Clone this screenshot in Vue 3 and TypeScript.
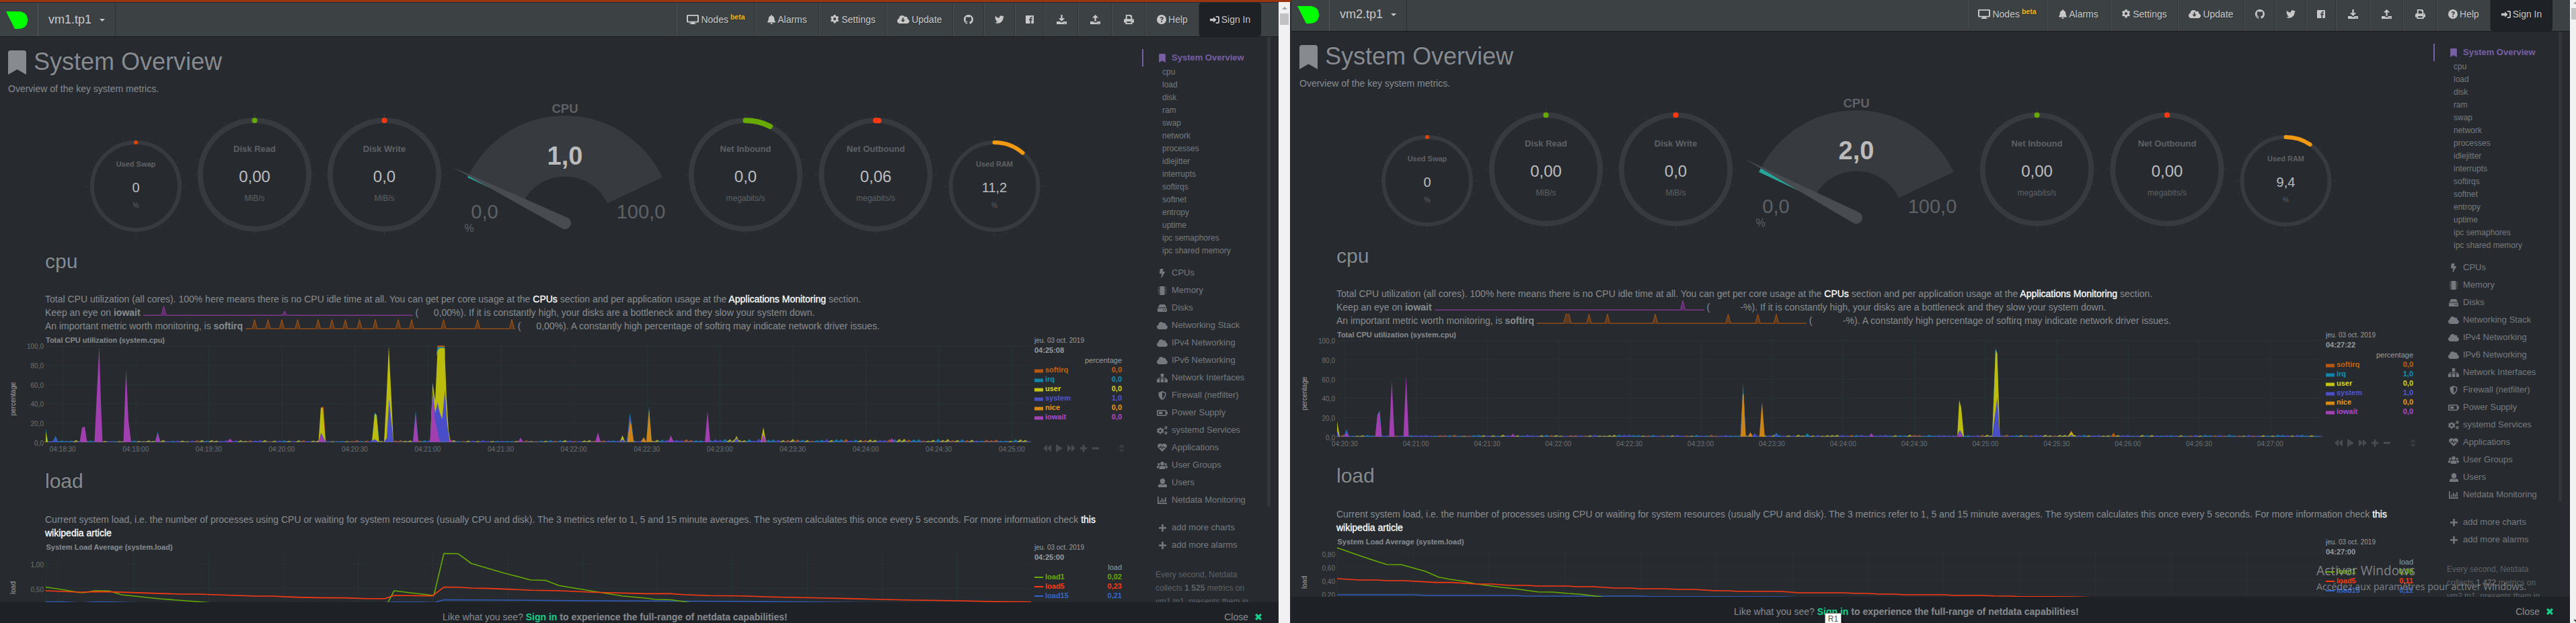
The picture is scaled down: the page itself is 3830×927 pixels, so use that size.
<script setup lang="ts">
interface Gauge { title: string; value: string; unit: string; cx: number; big: boolean; arc: number; color: string }
interface Spike { c: string; p: number[][] }
interface Legend { name: string; color: string; value: string }
interface Icon { w: number; h: number; d: string }
interface Panel {
  id: string; host: string; gauges: Gauge[]; cpu: string; cpuPct: number; unit: string
  iowait: number[][]; softirq: number[][]
  cpuTime: string; cpuTicks: { x: number; t: string }[]; spikes: Spike[]; noise: Spike[]; cpuLegend: Legend[]
  loadTime: string; loadGrid: { y: number; t: string }[]; loadX: number[]; lines: { color: string; d: string }[]; loadLegend: Legend[]
  metrics: string
}

const C = { softirq: '#b85c12', irq: '#0f86aa', user: '#bcbc0e', system: '#4a4dc8', nice: '#cb8415', iowait: '#a13fb0' }
const T = { softirq: '#c8600f', irq: '#1092b8', user: '#d8d812', system: '#5254d6', nice: '#ee9911', iowait: '#b447c6' }

const icons: Record<string, Icon> = {
  bookmark: { w: 384, h: 512, d: 'M0 512V48C0 21.49 21.49 0 48 0h288c26.51 0 48 21.49 48 48v464L192 400 0 512z' },
  desktop: { w: 18, h: 16, d: 'M1.5 0h15A1.5 1.5 0 0 1 18 1.500v10a1.500 1.500 0 0 1-1.500 1.500H11.500l.4 1.600H13.500V16h-9v-1.400h1.600l.4-1.600H1.500A1.500 1.500 0 0 1 0 11.500v-10A1.500 1.500 0 0 1 1.500 0zM2 2v9h14V2z' },
  bell: { w: 448, h: 512, d: 'M224 512c35.32 0 63.97-28.65 63.97-64H160.03c0 35.35 28.65 64 63.97 64zm215.39-149.71c-19.32-20.76-55.47-51.99-55.47-154.29 0-77.7-54.48-139.9-127.94-155.16V32c0-17.67-14.32-32-31.98-32s-31.98 14.33-31.98 32v20.84C118.56 68.1 64.08 130.3 64.08 208c0 102.3-36.15 133.53-55.47 154.29-6 6.45-8.66 14.16-8.61 21.71.11 16.4 12.98 32 32.1 32h383.8c19.12 0 32-15.6 32.1-32 .05-7.55-2.61-15.27-8.61-21.71z' },
  cog: { w: 16, h: 16, d: 'M6.500 0h3l.5 2.200 1.300.7 2.100-.7 1.500 2.600-1.600 1.500v1.500l1.600 1.500-1.500 2.600-2.100-.7-1.300.8-.5 2.200h-3L6 12l-1.300-.8-2.100.7-1.500-2.600 1.600-1.500V6.300L1.100 4.800l1.500-2.600 2.100.7L6 2.200zM8 4.700A2.400 2.400 0 1 0 8 9.500 2.400 2.400 0 0 0 8 4.700z' },
  cloud: { w: 640, h: 448, d: 'M537.6 194.600c4.100-10.700 6.400-22.400 6.400-34.600 0-53-43-96-96-96-19.700 0-38.100 6-53.300 16.200C367 32.200 315.300 0 256 0c-88.400 0-160 71.600-160 160 0 2.700.1 5.400.2 8.100C40.200 187.800 0 241.200 0 304c0 79.500 64.500 144 144 144h368c70.700 0 128-57.300 128-128 0-61.900-44-113.600-102.400-125.400z' },
  update: { w: 640, h: 448, d: 'M537.6 194.600c4.100-10.700 6.400-22.400 6.400-34.600 0-53-43-96-96-96-19.700 0-38.100 6-53.300 16.200C367 32.200 315.300 0 256 0c-88.400 0-160 71.600-160 160 0 2.700.1 5.400.2 8.100C40.200 187.800 0 241.200 0 304c0 79.500 64.500 144 144 144h368c70.700 0 128-57.300 128-128 0-61.900-44-113.600-102.400-125.400zM270 120h70v120h85L305 370 185 240h85z' },
  github: { w: 16, h: 16, d: 'M8 0C3.58 0 0 3.58 0 8c0 3.54 2.29 6.53 5.47 7.59.4.07.55-.17.55-.38 0-.19-.01-.82-.01-1.49-2.010.37-2.530-.49-2.690-.94-.09-.23-.48-.94-.82-1.130-.28-.15-.68-.52-.01-.53.63-.01 1.080.58 1.230.82.72 1.210 1.870.87 2.330.66.07-.52.28-.87.51-1.070-1.780-.2-3.640-.89-3.640-3.950 0-.87.31-1.590.82-2.150-.08-.2-.36-1.020.08-2.120 0 0 .67-.21 2.200.82.64-.18 1.320-.27 2-.27s1.360.09 2 .27c1.530-1.040 2.200-.82 2.200-.82.44 1.100.16 1.920.08 2.120.51.56.82 1.270.82 2.150 0 3.070-1.870 3.750-3.650 3.950.29.25.54.73.54 1.480 0 1.070-.01 1.930-.01 2.200 0 .21.15.46.55.38A8.010 8.010 0 0 0 16 8c0-4.420-3.580-8-8-8z' },
  twitter: { w: 512, h: 512, d: 'M459.37 151.716c.325 4.548.325 9.097.325 13.645 0 138.72-105.583 298.558-298.558 298.558-59.452 0-114.68-17.219-161.137-47.106 8.447.974 16.568 1.299 25.34 1.299 49.055 0 94.213-16.568 130.274-44.832-46.132-.975-84.792-31.188-98.112-72.772 6.498.974 12.995 1.624 19.818 1.624 9.421 0 18.843-1.3 27.614-3.573-48.081-9.747-84.143-51.98-84.143-102.985v-1.299c13.969 7.797 30.214 12.67 47.431 13.319-28.264-18.843-46.781-51.005-46.781-87.391 0-19.492 5.197-37.36 14.294-52.954 51.655 63.675 129.3 105.258 216.365 109.807-1.624-7.797-2.599-15.918-2.599-24.04 0-57.828 46.782-104.934 104.934-104.934 30.213 0 57.502 12.67 76.67 33.137 23.715-4.548 46.456-13.32 66.599-25.34-7.798 24.366-24.366 44.833-46.132 57.827 21.117-2.273 41.584-8.122 60.426-16.243-14.292 20.791-32.161 39.308-52.628 54.253z' },
  facebook: { w: 14, h: 14, d: 'M.8 0h12.400a.8.8 0 0 1 .8.8v12.400a.8.8 0 0 1-.8.8H9.700V8.600h1.800l.3-2.100H9.700V5.200c0-.6.2-1 1-1h1.100V2.300c-.2 0-.9-.1-1.600-.1-1.600 0-2.700 1-2.700 2.800v1.500H5.700v2.100h1.800V14H.8a.8.8 0 0 1-.8-.8V.8A.8.8 0 0 1 .8 0z' },
  download: { w: 16, h: 16, d: 'M6.800 0h2.400v6H13l-5 5-5-5h3.800zM0 11.500h5l3 2 3-2h5V16H0zm11.500 2.300v1h1v-1zm2 0v1h1v-1z' },
  upload: { w: 16, h: 16, d: 'M8 0l5 5H9.200v6H6.800V5H3zM0 11.500h5.500V13h5v-1.500H16V16H0zm11.500 2.300v1h1v-1zm2 0v1h1v-1z' },
  print: { w: 16, h: 16, d: 'M3 0h8l2 2v4.500a2.800 2.800 0 0 1 3 2.500v4h-2.500v3h-11v-3H0V9a2.800 2.800 0 0 1 3-2.500zM5 2v5h6V3.500H9.500V2zM4.500 11.500V14h7v-2.500zM13 8.300v1.200h1.200V8.300z' },
  help: { w: 16, h: 16, d: 'M8 0a8 8 0 1 1 0 16A8 8 0 0 1 8 0zM5 5.600l1.700.8c.3-.8.7-1.200 1.400-1.200.6 0 1.100.3 1.100.9 0 1.100-2.100 1.200-2.100 3.400h2c0-1.500 2.300-1.600 2.300-3.700C11.400 4.200 9.800 3.300 8.200 3.300 6.600 3.300 5.500 4.100 5 5.600zM8.100 10.500a1.300 1.300 0 1 0 0 2.600 1.300 1.300 0 0 0 0-2.600z' },
  signin: { w: 16, h: 13, d: 'M6 1.500L11 6.500l-5 5V8.500H0v-4h6zM10 0h3.500A2.500 2.500 0 0 1 16 2.500v8a2.500 2.500 0 0 1-2.500 2.500H10v-2h3a1 1 0 0 0 1-1V3a1 1 0 0 0-1-1h-3z' },
  bolt: { w: 320, h: 512, d: 'M296 160H180.600l42.600-129.800C227.200 15 215.700 0 200 0H56C44 0 33.800 8.900 32.200 20.800l-32 240C-1.700 275.200 9.500 288 24 288h118.700L96.600 482.500c-3.600 15.200 8 29.500 23.300 29.500 8.400 0 16.400-4.400 20.800-12l176-304c9.300-15.900-2.200-36-20.700-36z' },
  chip: { w: 16, h: 14, d: 'M4 0h8v14H4zM1 1.500h2v1H1zm0 2.500h2v1H1zm0 2.500h2v1H1zM1 9h2v1H1zm0 2.500h2v1H1zM13 1.500h2v1h-2zm0 2.500h2v1h-2zm0 2.500h2v1h-2zM13 9h2v1h-2zm0 2.500h2v1h-2z' },
  disk: { w: 16, h: 12, d: 'M3.800 0h8.400L15.500 5H.5zM1.500 6h13A1.500 1.500 0 0 1 16 7.500V11a1 1 0 0 1-1 1H1a1 1 0 0 1-1-1V7.500A1.500 1.500 0 0 1 1.500 6zM10 8.300v1.400h1.400V8.300zm2.600 0v1.400H14V8.300z' },
  sitemap: { w: 18, h: 14, d: 'M6.500 0h5v5H9.600v1.700H16V9h2v5h-5V9h1.800V7.900H9.600V9h1.900v5h-5V9h1.900V7.900H3.200V9H5v5H0V9h2V6.700h6.400V5H6.500z' },
  shield: { w: 14, h: 15, d: 'M7 0l6.300 2.300C14 8 12 12.700 7 15 2 12.700 0 8 .7 2.300zM7 2v10.700C10.500 11 12 7.700 11.600 3.600z' },
  battery: { w: 18, h: 11, d: 'M1.500 0h13.200a1.500 1.500 0 0 1 1.500 1.500v1.700H18v4.600h-1.800v1.700a1.500 1.500 0 0 1-1.500 1.500H1.500A1.500 1.500 0 0 1 0 9.500v-8A1.500 1.500 0 0 1 1.500 0zm.3 1.800v7.400h12.600V1.800zM3.400 3.400h6v4.200h-6z' },
  cogs: { w: 18, h: 15, d: 'M4.500 2.500h2.600l.4 1.500 1.300.6 1.500-.7 1.500 2.100L10.700 7v1.500l1.100 1.200-1.500 2-1.500-.6-1.300.7-.4 1.700H4.500l-.4-1.700-1.300-.7-1.500.6-1.300-2L1 8.500V7L0 5.900l1.300-2 1.500.6L4.100 4zM5.800 6a2 2 0 1 0 0 4 2 2 0 0 0 0-4zM14.800 0l1 1 1.400-.1.6 1.600-1 1 .2 1.400-1.500.7-1-1-1.500.2-.6-1.500 1-1-.2-1.400zM14.800 2a.9.9 0 1 0 0 1.800.9.900 0 0 0 0-1.800zM14.800 9l1 1 1.400-.1.6 1.600-1 1 .2 1.400-1.500.7-1-1-1.500.2-.6-1.500 1-1-.2-1.400zM14.800 11a.9.9 0 1 0 0 1.800.9.900 0 0 0 0-1.800z' },
  heart: { w: 16, h: 14, d: 'M8 2C9.500 0 12 -.5 14 .8 16.500 2.500 16.500 5.500 14.500 7.600L8 14 1.500 7.600C-.5 5.500-.5 2.500 2 .8 4-.5 6.500 0 8 2zM2 6.500v1.200h2.800l1-1.700 1.900 4.500L9.700 6.500l.7 1.200H14V6.500h-2.800L9.700 4 7.900 7.500 5.900 3 4 6.500z' },
  users: { w: 20, h: 14, d: 'M10 0a3.500 3.500 0 1 1 0 7 3.500 3.500 0 0 1 0-7zM3.500 2.500a2.200 2.200 0 1 1 0 4.400 2.200 2.200 0 0 1 0-4.400zM16.500 2.500a2.200 2.200 0 1 1 0 4.400 2.200 2.200 0 0 1 0-4.400zM4.500 14v-3A3 3 0 0 1 7.500 8h5a3 3 0 0 1 3 3v3zM0 12V9.500A2 2 0 0 1 2 7.500h3.500C4.200 8.300 3.600 9.800 3.600 12zM20 12V9.500a2 2 0 0 0-2-2h-3.500c1.300.8 1.900 2.300 1.900 4.500z' },
  user: { w: 14, h: 14, d: 'M7 0c2.300 0 4 1.700 4 4.300S9.300 9 7 9 3 6.900 3 4.300 4.700 0 7 0zM0 14v-2.500A2.500 2.500 0 0 1 2.500 9.200L4 9c1.800 1.300 4.200 1.300 6 0l1.500.2A2.500 2.500 0 0 1 14 11.500V14z' },
  chart: { w: 15, h: 12, d: 'M0 0h1.800v10.200H15V12H0zM3.500 6h1.800v3H3.500zM6.300 2.500h1.800V9H6.300zM9.200 4.500H11V9H9.200zM12 1h1.800v8H12z' },
  plus: { w: 12, h: 12, d: 'M4.600 0h2.800v4.600H12v2.800H7.400V12H4.600V7.400H0V4.600h4.600z' },
  close: { w: 10, h: 10, d: 'M2.300 0L5 2.700 7.700 0 10 2.300 7.300 5 10 7.700 7.700 10 5 7.300 2.300 10 0 7.700 2.700 5 0 2.300z' }
}

const nav = [
  { icon: 'desktop', iw: 18, ih: 14, label: 'Nodes', beta: true, w: 117 },
  { icon: 'bell', iw: 12, ih: 14, label: 'Alarms', w: 95 },
  { icon: 'cog', iw: 14, ih: 14, label: 'Settings', w: 100 },
  { icon: 'update', iw: 18, ih: 12, label: 'Update', w: 99 },
  { icon: 'github', iw: 14, ih: 14, label: '', w: 46 },
  { icon: 'twitter', iw: 14, ih: 14, label: '', w: 46 },
  { icon: 'facebook', iw: 12, ih: 12, label: '', w: 44 },
  { icon: 'download', iw: 15, ih: 14, label: '', w: 50 },
  { icon: 'upload', iw: 15, ih: 14, label: '', w: 50 },
  { icon: 'print', iw: 15, ih: 14, label: '', w: 50 },
  { icon: 'help', iw: 14, ih: 14, label: 'Help', w: 80 },
  { icon: 'signin', iw: 14, ih: 11, label: 'Sign In', w: 92, dark: true }
]

const subItems = ['cpu', 'load', 'disk', 'ram', 'swap', 'network', 'processes', 'idlejitter', 'interrupts', 'softirqs', 'softnet', 'entropy', 'uptime', 'ipc semaphores', 'ipc shared memory']
const menu = [
  ['bolt', 'CPUs', 8, 13], ['chip', 'Memory', 14, 13], ['disk', 'Disks', 14, 11], ['cloud', 'Networking Stack', 16, 11],
  ['cloud', 'IPv4 Networking', 16, 11], ['cloud', 'IPv6 Networking', 16, 11], ['sitemap', 'Network Interfaces', 16, 13],
  ['shield', 'Firewall (netfilter)', 12, 13], ['battery', 'Power Supply', 16, 9], ['cogs', 'systemd Services', 16, 13],
  ['heart', 'Applications', 14, 12], ['users', 'User Groups', 16, 11], ['user', 'Users', 13, 13], ['chart', 'Netdata Monitoring', 14, 11]
] as [string, string, number, number][]

const makeGauges = (net: [string, number][], outArc: number, ram: string, ramArc: number): Gauge[] => [
  { title: 'Used Swap', value: '0', unit: '%', cx: 202, big: false, arc: 0.05, color: '#dd4400' },
  { title: 'Disk Read', value: '0,00', unit: 'MiB/s', cx: 378.5, big: true, arc: 0.05, color: '#66aa00' },
  { title: 'Disk Write', value: '0,0', unit: 'MiB/s', cx: 571.5, big: true, arc: 0.05, color: '#fe3912' },
  { title: 'Net Inbound', value: net[0][0], unit: 'megabits/s', cx: 1108.5, big: true, arc: net[0][1], color: '#66aa00' },
  { title: 'Net Outbound', value: net[1][0], unit: 'megabits/s', cx: 1302, big: true, arc: outArc, color: '#fe3912' },
  { title: 'Used RAM', value: ram, unit: '%', cx: 1478.5, big: false, arc: ramArc, color: '#f09912' }
]

const gy = (g: Gauge) => (g.big ? 256 : 273)
const gr = (g: Gauge) => (g.big ? 80.7 : 65)
function arcPath(g: Gauge): string {
  const r = gr(g), a = (g.arc * Math.PI) / 180
  return `M${g.cx} ${gy(g) - r}A${r} ${r} 0 0 1 ${g.cx + r * Math.sin(a)} ${gy(g) - r * Math.cos(a)}`
}
function ticks(g: Gauge) {
  const inner = g.big ? 86 : 70
  return Array.from({ length: 24 }, (_, i) => {
    const a = (i * 15 * Math.PI) / 180, len = i % 6 === 0 ? 5 : 3
    return { x1: g.cx + inner * Math.sin(a), y1: gy(g) - inner * Math.cos(a), x2: g.cx + (inner + len) * Math.sin(a), y2: gy(g) - (inner + len) * Math.cos(a) }
  })
}

const HX = 840, HY = 328
const polar = (r: number, deg: number) => {
  const a = (deg * Math.PI) / 180
  return [HX - r * Math.cos(a), HY - r * Math.sin(a)]
}
function sector(from: number, to: number): string {
  const a = polar(160, from), b = polar(160, to), c = polar(69.500, to), d = polar(69.500, from)
  return `M${a}A160 160 0 0 1 ${b}L${c}A69.500 69.500 0 0 0 ${d}Z`
}
function needle(pct: number): string {
  const deg = 25.2 + pct * 1.296, t = polar(187.700, deg), l = polar(9, deg - 90), r = polar(9, deg + 90)
  return `M${t}L${r}A9 9 0 0 1 ${l}Z`
}

const yOf = (pct: number) => 653.7 - pct * 1.434
const poly = (p: number[][]) => p.map(([x, v]) => `${x},${yOf(v).toFixed(1)}`).join(' ')
const tri = (c: string, x: number, h: number, w = 4): Spike => ({ c, p: [[x - w, 0], [x, h], [x + w, 0]] })

/** Low background activity: small coloured bumps along the time axis. */
function makeNoise(seed: number, busyFrom: number): Spike[] {
  const out: Spike[] = []
  let s = seed
  const rnd = () => { s = (s * 16807) % 2147483647; return s / 2147483647 }
  const cols = [C.user, C.irq, C.system, C.softirq, C.user, C.system, C.irq]
  for (let x = 70; x < 1530; x += 7.2) {
    const busy = x > busyFrom
    const h = (busy ? 1.3 : 0.9) + rnd() * (busy ? 2 : 1.2)
    out.push(tri(cols[Math.floor(rnd() * cols.length)], x, h, 5))
    out.push(tri(C.system, x + 2.5, h * 0.5, 4))
  }
  return out
}

/** Sparkline outline: each peak is [x, height, flat width]. */
function spark(peaks: number[][]): string {
  let d = 'M0 14'
  for (const [x, h, f = 0] of peaks) d += `L${x - 3.500 - f / 2} 14L${x - f / 2} ${14 - h}L${x + f / 2} ${14 - h}L${x + 3.500 + f / 2} 14`
  return d + 'L401 14'
}
const line = (pts: number[][]) => 'M' + pts.map(p => p.join(' ')).join('L')
const range = (start: number, step: number, n: number) => Array.from({ length: n }, (_, i) => start + step * i)
function clock(start: number, i: number): string {
  const s = start + i * 30
  return `04:${String(Math.floor(s / 60)).padStart(2, '0')}:${String(s % 60).padStart(2, '0')}`
}
const legend = (v: string[]): Legend[] => (['softirq', 'irq', 'user', 'system', 'nice', 'iowait'] as const).map((n, i) => ({ name: n, color: T[n], value: v[i] }))
const loads = (v: string[]): Legend[] => [
  { name: 'load1', color: '#66aa00', value: v[0] }, { name: 'load5', color: '#fe3912', value: v[1] }, { name: 'load15', color: '#3366cc', value: v[2] }
]

const panels: Panel[] = [
  {
    id: 'one', host: 'vm1.tp1', gauges: makeGauges([['0,0', 26.8], ['0,06', 0]], 3.2, '11,2', 40.3), cpu: '1,0', cpuPct: 1, unit: '0,00',
    iowait: [[30.5, 13.500], [210, 6]],
    softirq: [13.500, 33.500, 54, 77.500, 108, 128.500, 148.500, 169.500, 193, 227, 247, 294.500, 345, 396].map(x => [x, 13.500]),
    cpuTime: '04:25:08', cpuTicks: range(93.2, 108.55, 14).map((x, i) => ({ x, t: clock(1110, i) })),
    noise: makeNoise(77, 950),
    spikes: [
      { c: C.irq, p: [[68, 0], [68, 14], [71.5, 0]] }, { c: C.user, p: [[68, 0], [68, 11], [71, 0]] },
      tri(C.irq, 82.5, 6.5), tri(C.system, 82.500, 5, 3),
      { c: C.iowait, p: [[118.500, 0], [122, 15], [126, 16], [129.500, 0]] },
      { c: C.iowait, p: [[140.500, 0], [144, 50], [147.500, 99.500], [150, 40], [152.500, 0]] },
      { c: C.iowait, p: [[183.500, 0], [187.400, 75.500], [191, 22], [195, 0]] },
      tri(C.irq, 234.5, 10.5), tri(C.iowait, 234.500, 9), tri(C.iowait, 342, 3.5, 5),
      { c: C.softirq, p: [[474, 0], [477.500, 36.5], [481, 36.5], [484.500, 0]] },
      { c: C.user, p: [[473.500, 0], [477, 35.500], [480, 35], [484, 0]] },
      { c: C.system, p: [[474, 0], [477.500, 9.5], [484, 0]] }, { c: C.iowait, p: [[473.500, 0], [477, 8], [483, 0]] },
      { c: C.irq, p: [[553, 0], [557, 31], [560, 28], [564, 0]] }, { c: C.user, p: [[553, 0], [557, 29], [560, 28], [563.500, 0]] }, tri(C.system, 557, 3, 6),
      { c: C.user, p: [[571, 0], [574.500, 45], [578, 99.500], [582, 45], [585, 0]] }, { c: C.system, p: [[571, 0], [575, 4], [578.5, 45], [585, 0]] },
      tri(C.irq, 618, 32.5), tri(C.iowait, 618, 29),
      { c: C.softirq, p: [[649, 90], [650.500, 100], [661, 100], [662, 90]] }, { c: C.irq, p: [[649, 90], [650.500, 98.5], [661, 98.5], [662, 90]] },
      { c: C.user, p: [[639.500, 0], [643.300, 61.5], [647, 43], [650.500, 95], [654, 97.5], [661, 97.500], [664, 45], [667, 12], [670, 0]] },
      { c: C.system, p: [[639.500, 0], [643.300, 54], [647, 30], [650.500, 41], [654, 30], [657.500, 24], [661.500, 54], [665, 18], [669, 0]] },
      { c: C.iowait, p: [[639.500, 0], [643.300, 49], [647, 22], [654, 0]] },
      tri(C.iowait, 669.5, 3), tri(C.iowait, 774, 4.5), tri(C.iowait, 889, 10),
      tri(C.user, 925.500, 7), tri(C.system, 925.500, 3),
      { c: C.irq, p: [[932, 0], [936.300, 30], [939, 20], [942.500, 0]] }, { c: C.system, p: [[932, 0], [936.300, 26], [939, 18], [942, 0]] },
      { c: C.nice, p: [[932.500, 0], [936.800, 22], [939, 17], [942, 0]] },
      tri(C.nice, 957, 5), tri(C.irq, 965, 37), tri(C.nice, 965, 34), tri(C.iowait, 997.500, 7),
      tri(C.iowait, 1052, 32), tri(C.user, 1095, 6.5), tri(C.system, 1095, 4), tri(C.user, 1135, 15.500), tri(C.iowait, 1135, 8), tri(C.iowait, 1326, 4)
    ],
    cpuLegend: legend(['0,0', '0,0', '0,0', '1,0', '0,0', '0,0']),
    loadTime: '04:25:00', loadGrid: [{ y: 834.5, t: '1,00' }, { y: 871.5, t: '0,50' }],
    loadX: [68.5, ...range(87.5, 111.25, 13)],
    lines: [
      { color: '#2f5cb8', d: line([[68, 891.5], [92, 891.500], [122, 893], [141, 891.500], [165, 891.800], [210, 893], [570, 893], [586, 891.700], [630, 892], [646, 892.500], [660, 888.500], [722, 888.700], [850, 889.700], [1090, 890.800], [1210, 891.700], [1400, 894], [1533, 895]]) },
      { color: '#66aa00', d: line([[68, 869.5], [92, 873.300], [118, 877.600], [126, 877.600], [141, 875], [162, 875.300], [181, 881], [238, 887], [301, 891.800], [350, 896], [570, 905], [586, 875], [612, 878.300], [645, 882], [660, 819.500], [681, 819.800], [701, 834.500], [747, 848], [789, 859], [811, 859.500], [831, 867.300], [888, 876.700], [925, 882.700], [960, 886], [973, 887.800], [998, 888.500], [1016, 891], [1045, 896]]) },
      { color: '#fe3912', d: line([[68, 875], [122, 877.300], [141, 876.400], [165, 876.600], [269, 880], [294, 880], [380, 883], [404, 883], [441, 884.600], [471, 885.400], [514, 885.600], [545, 886.700], [572, 886.700], [586, 882], [643, 882.600], [660, 869.600], [681, 869.700], [701, 871], [729, 871.600], [790, 874.300], [833, 875], [882, 877.300], [960, 879.400], [997, 879.400], [1016, 880.700], [1054, 882.300], [1104, 882.700], [1147, 884.300], [1222, 885.700], [1304, 887.700], [1347, 888.700], [1429, 890], [1485, 891.300], [1533, 891.700]]) }
    ],
    loadLegend: loads(['0,02', '0,23', '0,21']), metrics: '1 525'
  },
  {
    id: 'two', host: 'vm2.tp1', gauges: makeGauges([['0,00', 0.05], ['0,00', 0]], 0.05, '9,4', 33.8), cpu: '2,0', cpuPct: 2, unit: '-',
    iowait: [[369, 13.500]],
    softirq: [[45.500, 14, 4], [77.500, 13.500], [105, 13.500], [176, 13.500], [284.500, 13.500], [328.500, 13.500], [356, 13.500]],
    cpuTime: '04:27:22', cpuTicks: range(79.3, 105.85, 14).map((x, i) => ({ x: x, t: clock(1230, i) })),
    noise: makeNoise(4231, 1600),
    spikes: [
      { c: C.user, p: [[68, 0], [68, 16], [72, 0]] }, { c: C.system, p: [[68, 0], [68, 6], [71, 0]] },
      tri(C.irq, 82, 7.5), tri(C.system, 82, 6), tri(C.iowait, 82, 3.5),
      { c: C.irq, p: [[125, 0], [128, 23], [131.500, 27], [134.500, 0]] }, { c: C.iowait, p: [[124.500, 0], [128, 22], [131, 25.500], [134.500, 0]] },
      tri(C.iowait, 149.300, 58), tri(C.iowait, 170.600, 63), tri(C.iowait, 329.500, 3),
      tri(C.irq, 671.700, 55.500), tri(C.system, 671.700, 50), { c: C.nice, p: [[668, 0], [671, 44], [672.500, 44], [675.500, 0]] },
      tri(C.nice, 682.500, 4.5), tri(C.system, 689, 3.5), tri(C.nice, 699.800, 36), tri(C.irq, 721, 4), tri(C.system, 721, 3), tri(C.irq, 767, 3.5), tri(C.iowait, 862.500, 3.5),
      { c: C.user, p: [[990, 0], [993, 38], [996, 30], [1000, 0]] }, tri(C.system, 994, 7, 5), tri(C.iowait, 994, 4),
      { c: C.irq, p: [[1042, 0], [1047, 92], [1049.500, 87], [1053, 0]] }, { c: C.user, p: [[1042, 0], [1047, 90], [1049.500, 86], [1053.500, 0]] },
      { c: C.system, p: [[1042, 0], [1049.500, 41], [1053.500, 0]] },
      tri(C.softirq, 1159.600, 6.5, 5), tri(C.user, 1159.600, 5, 5), tri(C.system, 1159.600, 2, 4), tri(C.softirq, 1222.500, 4)
    ],
    cpuLegend: legend(['0,0', '1,0', '0,0', '1,0', '0,0', '0,0']),
    loadTime: '04:27:00',
    loadGrid: [{ y: 827.500, t: '0,80' }, { y: 847.500, t: '0,60' }, { y: 867.500, t: '0,40' }, { y: 887.500, t: '0,20' }],
    loadX: [68.500, ...range(181, 112.700, 13)],
    lines: [
      { color: '#2f5cb8', d: line([[68, 889], [183, 889], [199, 890], [330, 890], [349, 891], [517, 891], [536, 891.700], [733, 892], [800, 895]]) },
      { color: '#66aa00', d: line([[68, 819], [108, 833], [142, 844], [164, 844.300], [180, 848.700], [199, 854], [219, 862.700], [236, 866], [255, 868.700], [274, 872.700], [311, 877.700], [330, 879.700], [367, 884.700], [389, 885], [411, 887], [430, 888.300], [455, 891.300], [492, 897]]) },
      { color: '#fe3912', d: line([[68, 865], [102, 867], [127, 867], [142, 868], [167, 868], [214, 870.600], [239, 870.600], [274, 873], [299, 873], [324, 875], [349, 875], [367, 876], [411, 876], [424, 877], [449, 877], [480, 879], [505, 879], [517, 880], [555, 880], [574, 881], [599, 881], [630, 883], [649, 883], [667, 884], [727, 884], [755, 886], [820, 886], [842, 887], [858, 887], [874, 888], [896, 888], [911, 889], [970, 889], [986, 890], [1027, 890], [1045, 890.700], [1070, 891], [1082, 891.700], [1166, 892], [1250, 895]]) }
    ],
    loadLegend: loads(['0,08', '0,11', '0,11']), metrics: '1 472'
  }
]
</script>

<template>
  <div class="desk">
    <div v-for="p in panels" :key="p.id" class="window" :class="p.id">
      <div class="page">
        <header class="navbar">
          <div class="logo"><svg width="33" height="26" viewBox="0 0 33 26"><path d="M0 0H18C27 0 32 5 32 13S27 26 18 26H13Z" fill="#00ff00" /></svg></div>
          <div class="brand">{{ p.host }}<i class="caret" /></div>
          <nav class="links">
            <a v-for="n in nav" :key="n.icon" :class="{ dark: n.dark }" :style="{ width: n.w + 'px' }">
              <svg :width="n.iw" :height="n.ih" :viewBox="`0 0 ${icons[n.icon].w} ${icons[n.icon].h}`" preserveAspectRatio="none"><path :d="icons[n.icon].d" fill-rule="evenodd" /></svg>
              <span v-if="n.label">{{ n.label }}</span><sup v-if="n.beta">beta</sup>
            </a>
          </nav>
        </header>
        <div class="body">
          <main>
            <h1><svg width="27" height="36" viewBox="0 0 384 512"><path :d="icons.bookmark.d" /></svg>System Overview</h1>
            <p class="lead">Overview of the key system metrics.</p>
            <svg class="gauges" width="1660" height="212" viewBox="0 138 1660 212">
              <g v-for="g in p.gauges" :key="g.title" text-anchor="middle">
                <line v-for="(t, i) in ticks(g)" :key="i" v-bind="t" stroke="#373b40" />
                <circle :cx="g.cx" :cy="gy(g)" :r="gr(g)" fill="none" stroke="#373a3e" :stroke-width="g.big ? 8 : 6" />
                <path :d="arcPath(g)" fill="none" :stroke="g.color" :stroke-width="g.big ? 8 : 6" stroke-linecap="round" />
                <text :x="g.cx" :y="g.big ? 222 : 244" :font-size="g.big ? 13 : 11" font-weight="bold" fill="#5e6165">{{ g.title }}</text>
                <text :x="g.cx" :y="g.big ? 267 : 282" :font-size="g.big ? 24 : 20" fill="#bbbdbf">{{ g.value }}</text>
                <text :x="g.cx" :y="g.big ? 295 : 305" :font-size="g.big ? 12 : 10" fill="#5e6165">{{ g.unit }}</text>
              </g>
              <path :d="sector(25.2, 154.8)" fill="#373a3e" />
              <path :d="sector(25.2, 25.2 + p.cpuPct * 1.296)" fill="#26a69a" />
              <path :d="needle(p.cpuPct)" fill="#484b4f" />
              <g text-anchor="middle" fill="#5e6165">
                <text x="840" y="163.500" font-size="18.500" font-weight="bold">CPU</text>
                <text x="840" y="240.500" font-size="38" font-weight="bold" fill="#bbbbbb">{{ p.cpu }}</text>
                <text x="720.500" y="320.500" font-size="29">0,0</text>
                <text x="953" y="320.500" font-size="29">100,0</text>
                <text x="697.500" y="340.500" font-size="16">%</text>
              </g>
            </svg>

            <h2>cpu</h2>
            <div class="text">
              Total CPU utilization (all cores). 100% here means there is no CPU idle time at all. You can get per core usage at the <a>CPUs</a> section and per application usage at the <a>Applications Monitoring</a> section.<br>
              Keep an eye on <b>iowait</b> <svg class="spark" width="401" height="16" viewBox="0 0 401 16"><path :d="spark(p.iowait) + 'V15H0Z'" fill="#5d2f69" /><path :d="spark(p.iowait)" fill="none" stroke="#8f3a9d" /></svg> (<span class="num">{{ p.unit }}</span>%). If it is constantly high, your disks are a bottleneck and they slow your system down.<br>
              An important metric worth monitoring, is <b>softirq</b> <svg class="spark" width="401" height="16" viewBox="0 0 401 16"><path :d="spark(p.softirq) + 'V15H0Z'" fill="#5d3a20" /><path :d="spark(p.softirq)" fill="none" stroke="#a85410" /></svg> (<span class="num">{{ p.unit }}</span>%). A constantly high percentage of softirq may indicate network driver issues.
            </div>
            <svg class="chart" width="1690" height="204" viewBox="0 491 1690 204">
              <text x="68" y="506" class="title">Total CPU utilization (system.cpu)</text>
              <g stroke="#283336">
                <line v-for="v in [0, 20, 40, 60, 80, 100]" :key="v" x1="68" x2="1533" :y1="Math.round(yOf(v)) + .5" :y2="Math.round(yOf(v)) + .5" />
                <line v-for="t in p.cpuTicks" :key="t.t" :x1="Math.round(t.x) + .5" :x2="Math.round(t.x) + .5" y1="510" y2="654" />
              </g>
              <g class="axis">
                <text v-for="v in [0, 20, 40, 60, 80, 100]" :key="v" x="65" :y="yOf(v) + 5" text-anchor="end">{{ v }},0</text>
                <text v-for="t in p.cpuTicks" :key="t.t" :x="t.x" y="668" text-anchor="middle">{{ t.t }}</text>
              </g>
              <text class="unit" transform="translate(23 589.500) rotate(-90)" text-anchor="middle">percentage</text>
              <rect x="68" y="652.500" width="1465" height="1.500" fill="#4b4b75" />
              <polygon v-for="(s, i) in p.noise" :key="'n' + i" :points="poly(s.p)" :fill="s.c" opacity=".85" />
              <polygon v-for="(s, i) in p.spikes" :key="i" :points="poly(s.p)" :fill="s.c" />
              <g class="legend">
                <text x="1538" y="506" font-size="10">jeu. 03 oct. 2019</text>
                <text x="1538" y="521" font-weight="bold">{{ p.cpuTime }}</text>
                <text x="1668" y="536" text-anchor="end">percentage</text>
                <g v-for="(l, i) in p.cpuLegend" :key="l.name" :fill="l.color" font-weight="bold">
                  <rect x="1538" :y="545.500 + i * 14" width="13" height="5" opacity=".88" />
                  <text x="1554" :y="550 + i * 14">{{ l.name }}</text>
                  <text x="1668" :y="550 + i * 14" text-anchor="end">{{ l.value }}</text>
                </g>
              </g>
              <path d="M1557 657.500v11l-6-5.500zM1563 657.500v11l-6-5.500zM1570 657l10 6-10 6zM1587 657.500v11l6-5.500zM1593 657.500v11l6-5.500zM1609.500 658h3v3.500h3.500v3h-3.500v4h-3v-4h-3.500v-3h3.500zM1624 661.500h10v3h-10z" fill="#484b4f" />
              <path d="M1663 662l4.500-5 4.500 5zM1663 664.500l4.500 5 4.500-5z" fill="#3a3d41" />
            </svg>

            <h2>load</h2>
            <div class="text">
              Current system load, i.e. the number of processes using CPU or waiting for system resources (usually CPU and disk). The 3 metrics refer to 1, 5 and 15 minute averages. The system calculates this once every 5 seconds. For more information check <a>this<br>wikipedia article</a>
            </div>
            <svg class="chart" width="1690" height="110" viewBox="0 799 1690 110">
              <text x="68.500" y="814" class="title">System Load Average (system.load)</text>
              <g :stroke="p.id === 'one' ? '#283336' : '#2c3034'">
                <line v-for="g in p.loadGrid" :key="g.t" x1="68" x2="1533" :y1="g.y" :y2="g.y" />
                <line v-for="x in p.loadX" :key="x" :x1="Math.floor(x) + .5" :x2="Math.floor(x) + .5" y1="818" y2="909" />
              </g>
              <g class="axis"><text v-for="g in p.loadGrid" :key="g.t" x="65" :y="g.y + 5" text-anchor="end">{{ g.t }}</text></g>
              <text class="unit" transform="translate(23 870.500) rotate(-90)" text-anchor="middle">load</text>
              <path v-for="l in p.lines" :key="l.color" :d="l.d" fill="none" :stroke="l.color" stroke-width="1.600" stroke-linejoin="round" />
              <g class="legend">
                <text x="1538" y="814" font-size="10">jeu. 03 oct. 2019</text>
                <text x="1538" y="829" font-weight="bold">{{ p.loadTime }}</text>
                <text x="1668" y="844" text-anchor="end">load</text>
                <g v-for="(l, i) in p.loadLegend" :key="l.name" :fill="l.color" font-weight="bold">
                  <rect x="1538" :y="854 + i * 14" width="13" height="2" />
                  <text x="1554" :y="858 + i * 14">{{ l.name }}</text>
                  <text x="1668" :y="858 + i * 14" text-anchor="end">{{ l.value }}</text>
                </g>
              </g>
            </svg>
          </main>
          <aside>
            <div class="item active"><span class="ic"><svg width="10" height="13" viewBox="0 0 384 512"><path :d="icons.bookmark.d" /></svg></span>System Overview</div>
            <ul><li v-for="s in subItems" :key="s">{{ s }}</li></ul>
            <div v-for="m in menu" :key="m[1]" class="item"><span class="ic"><svg :width="m[2]" :height="m[3]" :viewBox="`0 0 ${icons[m[0]].w} ${icons[m[0]].h}`" preserveAspectRatio="none"><path :d="icons[m[0]].d" fill-rule="evenodd" /></svg></span>{{ m[1] }}</div>
            <div class="more">
              <div v-for="m in ['add more charts', 'add more alarms']" :key="m" class="item"><span class="ic"><svg width="11" height="11" viewBox="0 0 12 12"><path :d="icons.plus.d" /></svg></span>{{ m }}</div>
            </div>
            <p>Every second, Netdata<br>collects <b>{{ p.metrics }}</b> metrics on<br>{{ p.host }}, presents them in</p>
          </aside>
          <i class="rail" />
        </div>
        <footer>
          <div class="msg">Like what you see? <b><em>Sign in</em> to experience the full-range of netdata capabilities!</b></div>
          <div class="close">Close <svg width="10" height="10" viewBox="0 0 10 10"><path :d="icons.close.d" /></svg></div>
        </footer>
      </div>
      <div class="scroll"><i class="up" /><i class="thumb" /><i class="down" /></div>
    </div>
    <svg class="watermark" width="330" height="52" viewBox="0 0 330 52">
      <text x="0" y="20" font-size="20" textLength="147" lengthAdjust="spacingAndGlyphs">Activer Windows</text>
      <text x="0" y="42" font-size="14.500" textLength="312" lengthAdjust="spacingAndGlyphs">Accédez aux paramètres pour activer Windows.</text>
    </svg>
    <div class="tip">R1</div>
  </div>
</template>

<style>
body { margin: 0; overflow: hidden; background: #272b30; }
</style>

<style scoped>
.desk { position: relative; display: flex; width: 3830px; height: 927px; overflow: hidden; background: #272b30; font-family: "Liberation Sans", Arial, sans-serif; color: #878b8f; }
.window { display: flex; flex: none; box-sizing: border-box; height: 927px; }
.one { width: 1919px; border-top: 3px solid #9b3510; padding-top: 0; }
.two { width: 1920px; margin-top: -5px; height: 932px; padding-left: 1px; }
.page { display: flex; flex-direction: column; width: 1901px; padding-top: 1px; background: #272b30; overflow: hidden; flex: none; }
.navbar { display: flex; flex: none; height: 50px; border-bottom: 1px solid #1a1c1f; background: #3c4144; }
.logo { width: 47px; padding: 13px 0 0 9px; border-right: 1px solid #55595c; }
.brand { display: flex; align-items: center; box-sizing: border-box; width: 115px; padding: 0 0 0 15px; border-right: 1px solid #2e3235; font-size: 18px; color: #c8c8c8; }
.caret { margin: 2px 0 0 12px; border: 4px solid transparent; border-top-color: #c8c8c8; border-bottom: 0; }
.links { display: flex; margin-left: auto; margin-right: 26px; }
.links a { display: flex; box-sizing: border-box; align-items: center; justify-content: center; gap: 3px; border-left: 1px solid #4a4f52; border-right: 1px solid #303437; border-radius: 4px; font-size: 14px; line-height: 20px; color: #c8c8c8; white-space: nowrap; text-shadow: 1px 1px 1px rgba(0, 0, 0, .3); }
.links a.dark { background: #1e2226; border-color: #1e2226; }
.links svg { fill: #c8c8c8; flex: none; }
.links sup { margin-top: -8px; font-size: 10.5px; font-weight: bold; line-height: 12px; color: #f0b90c; vertical-align: 0; }
.body { display: flex; flex: 1; min-height: 0; overflow: hidden; }
main { width: 1698px; flex: none; }
h1 { display: flex; align-items: center; gap: 11px; margin: 17px 0 0 12px; height: 40px; font-size: 36px; line-height: 40px; font-weight: normal; white-space: nowrap; }
h1 svg { fill: #878b8f; margin-top: 2px; }
h1, h2 { text-shadow: -1px -1px 0 rgba(0, 0, 0, .3); }
.lead { margin: 10px 0 0 12px; font-size: 14px; line-height: 20px; }
svg.gauges, svg.chart { display: block; }
h2 { margin: 18px 0 29px 67px; height: 34px; font-size: 30px; line-height: 34px; font-weight: normal; }
.chart + h2 { margin-top: 0; margin-bottom: 30px; }
.text { margin-left: 67px; height: 60px; font-size: 14px; line-height: 20px; white-space: nowrap; }
.chart + h2 + .text { height: 40px; }
.text a { color: #fff; -webkit-text-stroke: .3px #fff; }
.spark { height: 16px; vertical-align: -1px; margin-top: -4px; }
.num { display: inline-block; width: 50px; text-align: right; }
.title { font-size: 11px; font-weight: bold; fill: #878b8f; }
.axis { font-size: 10px; fill: #6b6f73; }
.unit { font-size: 10px; fill: #a0a3a6; }
.legend { font-size: 11px; }
.legend > text { fill: #999c9f; }
aside { width: 186px; box-sizing: border-box; padding-top: 18px; flex: none; color: #767a7e; }
.item { display: flex; align-items: center; box-sizing: border-box; height: 26px; padding-left: 22px; font-size: 13px; line-height: 26px; white-space: nowrap; }
.item svg { fill: #767a7e; }
.ic { display: flex; justify-content: center; width: 16px; margin-right: 6px; flex: none; }
.active { border-left: 2px solid #775fa5; padding-left: 20px; font-weight: bold; color: #775fa5; }
.active svg { fill: #775fa5; }
ul { list-style: none; margin: -1px 0 10px; padding: 0 0 0 30px; font-size: 12px; line-height: 19px; }
.more { margin-top: 15px; }
aside p { margin: 21px 0 0 20px; font-size: 12px; line-height: 20px; color: #5d6165; white-space: nowrap; }
.rail { width: 5px; height: 699px; background: #33373b; border-radius: 0 0 3px 3px; }
footer { display: flex; flex: none; box-sizing: border-box; height: 31px; padding: 12px 25px 0 658px; background: #1e2227; font-size: 14px; line-height: 20px; white-space: nowrap; overflow: hidden; }
.two footer { height: 39px; }
footer em { font-style: normal; color: #18cf8b; }
.close { margin-left: auto; display: flex; align-items: center; gap: 10px; height: 20px; }
.close svg { fill: #18cf8b; }
.scroll { display: flex; flex-direction: column; align-items: center; width: 17px; background: #f1f1f1; flex: none; }
.up { margin-top: 7px; border: 4px solid transparent; border-bottom-color: #a3a3a3; border-top: 0; }
.thumb { width: 13px; height: 17px; margin-top: 6px; background: #c1c1c1; }
.down { display: none; }
.two .down { display: block; margin: auto 0 1px; border: 4px solid transparent; border-top-color: #505050; border-bottom: 0; }
.watermark { position: absolute; left: 3444px; top: 836px; font-family: "Open Sans", sans-serif; fill: rgba(165, 167, 169, .72); }
.tip { position: absolute; left: 2713px; top: 912px; width: 25px; height: 20px; background: #fff; border: 1px solid #767676; box-sizing: border-box; font-size: 12px; line-height: 17px; text-align: center; color: #575757; box-shadow: 2px 2px 2px rgba(0, 0, 0, .5); }
</style>
